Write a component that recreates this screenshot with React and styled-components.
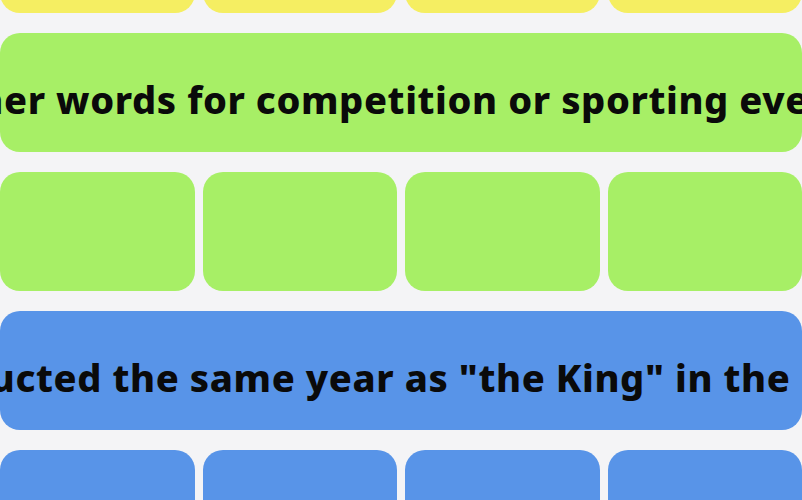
import styled, { createGlobalStyle } from 'styled-components';

const COLORS = {
  yellow: '#f5ee62',
  green: '#a7ef66',
  blue: '#5894e8',
};

const GlobalStyle = createGlobalStyle`
  html, body {
    margin: 0;
    padding: 0;
    background: #f4f4f6;
    overflow: hidden;
  }
`;

const groups = [
  { color: 'yellow', title: '' },
  { color: 'green', title: 'Other words for competition or sporting events' },
  { color: 'blue', title: 'Inducted the same year as "the King" in the Hall' },
];

export default function App() {
  return (
    <>
      <GlobalStyle />
      <Board>
        {groups.map((group) => (
          <Group key={group.color}>
            {group.title && (
              <Banner $color={COLORS[group.color]}>
                <Title>{group.title}</Title>
              </Banner>
            )}
            <TileRow>
              {[0, 1, 2, 3].map((i) => (
                <Tile key={i} $color={COLORS[group.color]} />
              ))}
            </TileRow>
          </Group>
        ))}
      </Board>
    </>
  );
}

const Board = styled.div`
  display: flex;
  flex-direction: column;
  gap: 20px;
  width: 802px;
  margin-top: -106px;
`;

const Group = styled.section`
  display: flex;
  flex-direction: column;
  gap: 20px;
`;

const Banner = styled.div`
  height: 119px;
  border-radius: 20px;
  background: ${(props) => props.$color};
  display: flex;
  align-items: center;
  justify-content: center;
  overflow: hidden;
`;

const Title = styled.span`
  flex-shrink: 0;
  white-space: nowrap;
  font-family: 'Noto Sans', 'Open Sans', sans-serif;
  font-weight: 800;
  font-size: 38px;
  letter-spacing: 0.6px;
  color: #0a0a0a;
  padding-top: 13px;
`;

const TileRow = styled.div`
  display: grid;
  grid-template-columns: repeat(4, 1fr);
  gap: 8px;
`;

const Tile = styled.div`
  height: 119px;
  border-radius: 20px;
  background: ${(props) => props.$color};
`;
